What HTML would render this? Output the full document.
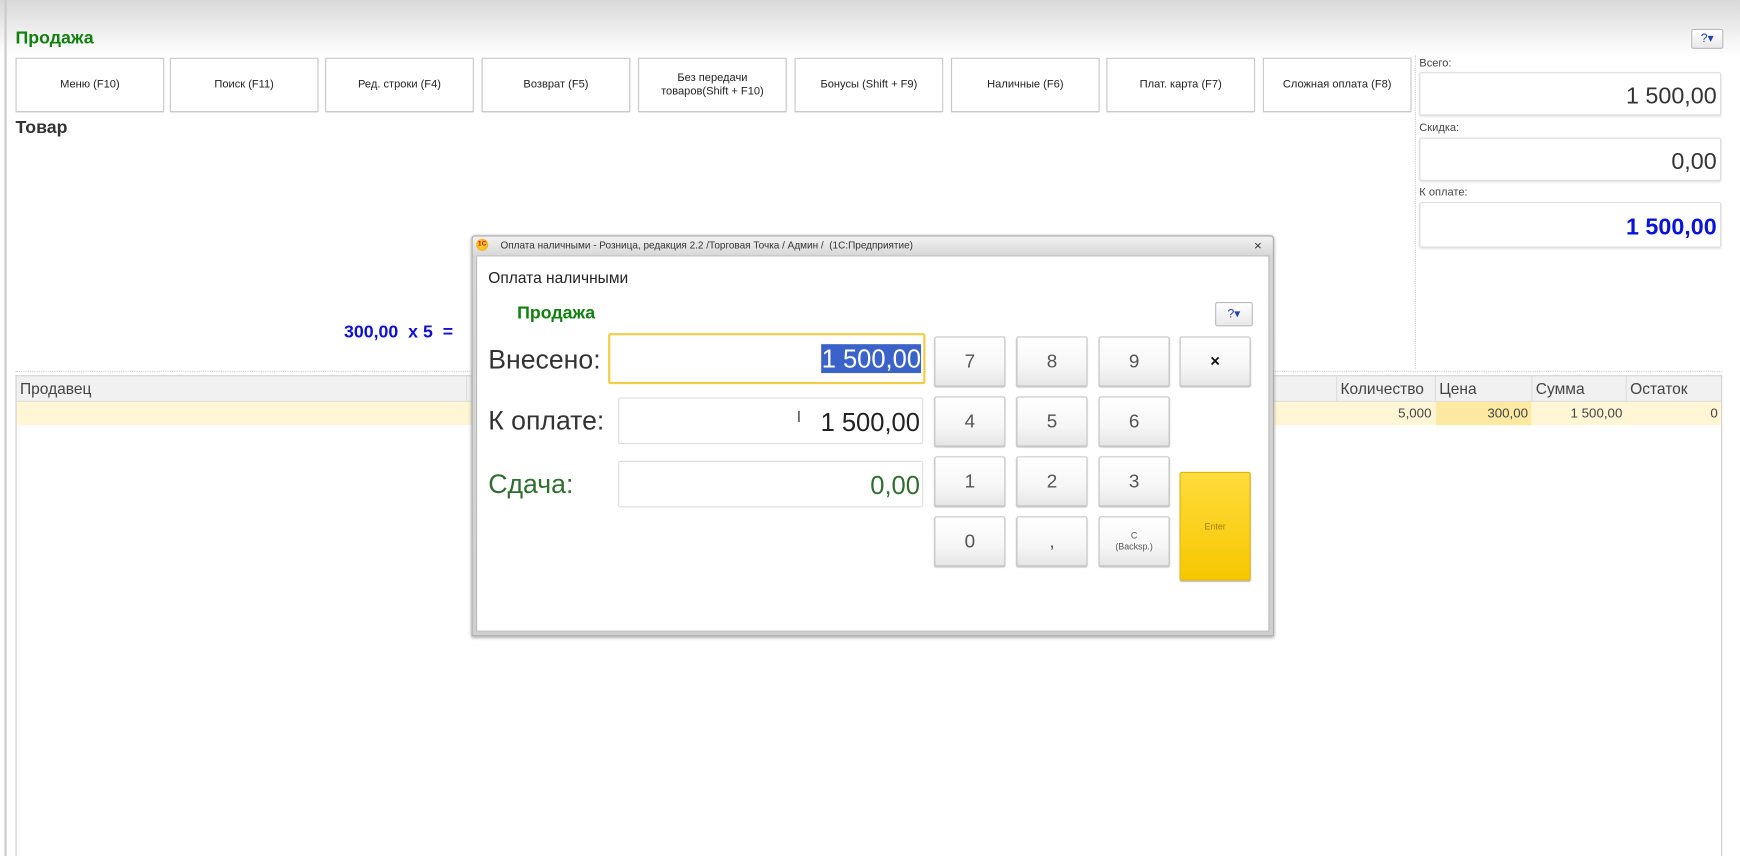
<!DOCTYPE html>
<html><head><meta charset="utf-8"><style>
html,body{margin:0;padding:0;width:1740px;height:856px;overflow:hidden;background:#fff}
#w{position:absolute;left:0;top:0;width:1568px;height:771px;transform:scale(1.10969,1.11025);transform-origin:0 0;font-family:"Liberation Sans",sans-serif;background:#fff;color:#333}
.a{position:absolute}
.top{left:0;top:0;width:1568px;height:50px;background:linear-gradient(#d8d8d8,#f4f4f4 70%,#fff)}
.btn{position:absolute;top:52px;width:132px;height:47px;border:1px solid #c8c8c8;background:#fff;font-size:10px;color:#222;display:flex;align-items:center;justify-content:center;text-align:center;line-height:12px;box-shadow:0 1px 1px #ddd}
.lbl{font-size:10px;color:#444}
.box{position:absolute;left:1279px;width:272px;border:1px solid #ddd;border-radius:2px;background:#fff;text-align:right;font-size:21px;box-sizing:border-box;padding-right:3px;box-shadow:0 1px 2px #e4e4e4}
.hb{position:absolute;border:1px solid #bbb;border-radius:2px;background:linear-gradient(#fff,#e8e8e8);font-size:11px;color:#2244aa;text-align:center}
.th{position:absolute;top:339px;height:23px;font-size:14px;color:#444;line-height:23px;border-left:1px solid #ddd;padding-left:3px;box-sizing:border-box}
.td{position:absolute;top:362px;height:21px;font-size:12px;color:#444;line-height:21px;text-align:right;padding-right:3px;box-sizing:border-box}
.k{position:absolute;width:64px;height:45px;border:1px solid #c6c6c6;border-radius:2px;background:linear-gradient(#fff,#f6f6f6 60%,#e6e6e6);box-sizing:border-box;font-size:17px;color:#555;display:flex;align-items:center;justify-content:center;box-shadow:0 1px 1px #bbb}
.in{position:absolute;background:#fff;border:1px solid #ddd;border-radius:2px;box-sizing:border-box;text-align:right;font-size:23px;padding-right:2px}
.big{position:absolute;left:440px;font-size:24px}
</style></head><body><div id="w">
<div class="a top"></div>
<div class="a" style="left:4px;top:0;width:2px;height:771px;background:#ccc"></div>
<div class="a" style="left:14px;top:26px;font-size:16px;font-weight:bold;color:#12800f">Продажа</div>
<div class="hb" style="left:1524px;top:26px;width:27px;height:16px;line-height:16px">?▾</div>
<div class="btn" style="left:14px">Меню (F10)</div>
<div class="btn" style="left:153px">Поиск (F11)</div>
<div class="btn" style="left:293px">Ред. строки (F4)</div>
<div class="btn" style="left:434px">Возврат (F5)</div>
<div class="btn" style="left:575px">Без передачи<br>товаров(Shift + F10)</div>
<div class="btn" style="left:716px">Бонусы (Shift + F9)</div>
<div class="btn" style="left:857px">Наличные (F6)</div>
<div class="btn" style="left:997px">Плат. карта (F7)</div>
<div class="btn" style="left:1138px">Сложная оплата (F8)</div>
<div class="a" style="left:14px;top:107px;font-size:16px;font-weight:bold;color:#333">Товар</div>
<div class="a" style="left:1275px;top:50px;height:282px;border-left:1px dotted #ccc"></div>
<div class="a lbl" style="left:1279px;top:52px">Всего:</div>
<div class="box" style="top:65px;height:39px;line-height:42px">1 500,00</div>
<div class="a lbl" style="left:1279px;top:110px">Скидка:</div>
<div class="box" style="top:124px;height:39px;line-height:42px">0,00</div>
<div class="a lbl" style="left:1279px;top:168px">К оплате:</div>
<div class="box" style="top:182px;height:41px;line-height:44px;color:#0a14d8;font-weight:bold">1 500,00</div>
<div class="a" style="left:310px;top:291px;font-size:16px;font-weight:bold;color:#1010d0">300,00&nbsp; x 5&nbsp; =</div>
<div class="a" style="left:14px;top:334px;width:1538px;border-top:1px dotted #ccc"></div>
<div class="a" style="left:14px;top:338px;width:1538px;height:433px;border:1px solid #ccc;border-bottom:none;box-sizing:border-box"></div>
<div class="a" style="left:15px;top:339px;width:1536px;height:23px;background:#f1f1f1;border-bottom:1px solid #ddd;box-sizing:border-box"></div>
<div class="th" style="left:15px;width:405px;border-left:none">Продавец</div>
<div class="th" style="left:420px;width:784px"></div>
<div class="th" style="left:1204px;width:89px">Количество</div>
<div class="th" style="left:1293px;width:87px">Цена</div>
<div class="th" style="left:1380px;width:85px">Сумма</div>
<div class="th" style="left:1465px;width:86px">Остаток</div>
<div class="a" style="left:15px;top:362px;width:1536px;height:21px;background:#fff6d6"></div>
<div class="a" style="left:1294px;top:362px;width:86px;height:21px;background:#fde9a2"></div>
<div class="td" style="left:1204px;width:89px">5,000</div>
<div class="td" style="left:1293px;width:87px">300,00</div>
<div class="td" style="left:1380px;width:85px">1 500,00</div>
<div class="td" style="left:1465px;width:86px">0</div>

<div class="a" style="left:425px;top:212px;width:723px;height:361px;border:1px solid #aaa;border-radius:3px 3px 0 0;background:linear-gradient(#f2f2f2,#d6d6d6 18px,#cfcfcf);box-sizing:border-box;box-shadow:0 1px 3px #999"></div>
<div class="a" style="left:429px;top:215px;width:11px;height:11px;border-radius:50%;background:radial-gradient(#ffe04a,#f0a000);font-size:6px;color:#d00;font-weight:bold;text-align:center;line-height:11px">1С</div>
<div class="a" style="left:451px;top:216px;font-size:9px;color:#333">Оплата наличными - Розница, редакция 2.2 /Торговая Точка / Админ /&nbsp; (1С:Предприятие)</div>
<div class="a" style="left:1130px;top:214px;font-size:12px;color:#333">×</div>
<div class="a" style="left:429px;top:230px;width:715px;height:339px;background:#fff;border:1px solid #bbb;box-sizing:border-box"></div>
<div class="a" style="left:440px;top:242px;font-size:14px;color:#222">Оплата наличными</div>
<div class="a" style="left:466px;top:274px;font-size:16px;font-weight:bold;color:#12800f">Продажа</div>
<div class="hb" style="left:1095px;top:272px;width:32px;height:20px;line-height:20px">?▾</div>
<div class="big" style="top:311px">Внесено:</div>
<div class="in" style="left:548px;top:300px;width:286px;height:46px;border:2px solid #f2cd45;line-height:42px"><span style="background:#3a62c8;color:#fff">1 500,00</span></div>
<div class="big" style="top:366px">К оплате:</div>
<div class="in" style="left:557px;top:358px;width:275px;height:42px;line-height:43px;color:#222">1 500,00</div>
<div class="a" style="left:718px;top:367px;font-size:14px;color:#444">I</div>
<div class="big" style="top:423px;color:#2f6e2f">Сдача:</div>
<div class="in" style="left:557px;top:415px;width:275px;height:42px;line-height:43px;color:#2f6e2f">0,00</div>
<div class="k" style="left:842px;top:303px">7</div><div class="k" style="left:916px;top:303px">8</div><div class="k" style="left:990px;top:303px">9</div><div class="k" style="left:1063px;top:303px;color:#111;font-size:15px;font-weight:bold">×</div>
<div class="k" style="left:842px;top:357px">4</div><div class="k" style="left:916px;top:357px">5</div><div class="k" style="left:990px;top:357px">6</div>
<div class="k" style="left:842px;top:411px">1</div><div class="k" style="left:916px;top:411px">2</div><div class="k" style="left:990px;top:411px">3</div>
<div class="k" style="left:842px;top:465px">0</div><div class="k" style="left:916px;top:465px">,</div><div class="k" style="left:990px;top:465px;font-size:8px;text-align:center;line-height:10px">C<br>(Backsp.)</div>
<div class="k" style="left:1063px;top:425px;height:98px;background:linear-gradient(#ffdc3c,#f6c700);border-color:#e0b400;font-size:8px;color:#a08000;align-items:flex-start;padding-top:44px">Enter</div>
</div></body></html>
